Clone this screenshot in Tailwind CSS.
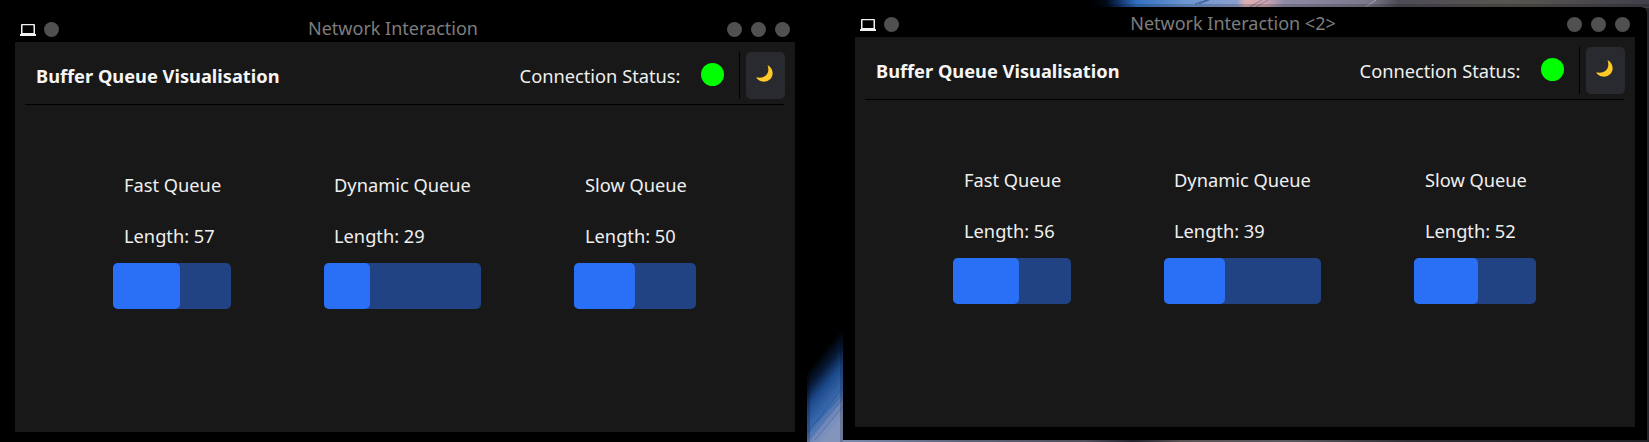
<!DOCTYPE html>
<html lang="en">
<head>
<meta charset="utf-8">
<title>Network Interaction</title>
<script src="https://cdn.jsdelivr.net/npm/@tailwindcss/browser@4"></script>
</head>
<body class="relative h-[442px] w-[1649px] overflow-hidden bg-black font-['Noto_Sans',sans-serif] text-[18.25px] leading-[25px] text-[#efefef]">

<!-- Desktop wallpaper -->
<svg class="absolute inset-0" width="1649" height="442" viewBox="0 0 1649 442">
  <defs>
    <linearGradient id="top" x1="1092" x2="1649" y1="0" y2="0" gradientUnits="userSpaceOnUse">
      <stop offset="0" stop-color="#000"/><stop offset=".025" stop-color="#020a18"/><stop offset=".05" stop-color="#12356c"/>
      <stop offset=".08" stop-color="#3470c0"/><stop offset=".17" stop-color="#6c96d0"/><stop offset=".26" stop-color="#8b9fcd"/>
      <stop offset=".275" stop-color="#dbb0b4"/><stop offset=".31" stop-color="#cfa6b2"/><stop offset=".345" stop-color="#8e8ba6"/>
      <stop offset=".5" stop-color="#797789"/><stop offset=".55" stop-color="#4d4c56"/>
      <stop offset=".75" stop-color="#58544f"/><stop offset="1" stop-color="#41404b"/>
    </linearGradient>
    <linearGradient id="gap" x1="808" y1="370" x2="853" y2="407" gradientUnits="userSpaceOnUse">
      <stop offset="0" stop-color="#000"/><stop offset=".2" stop-color="#081a38"/><stop offset=".4" stop-color="#1d4a8c"/>
      <stop offset=".68" stop-color="#3c6cb0"/><stop offset=".82" stop-color="#7189ba"/><stop offset="1" stop-color="#8495bd"/>
    </linearGradient>
    <linearGradient id="low" x1="843" x2="1649" y1="0" y2="0" gradientUnits="userSpaceOnUse">
      <stop offset="0" stop-color="#7b8caf"/><stop offset=".15" stop-color="#5d6479"/><stop offset=".3" stop-color="#51505c"/>
      <stop offset=".36" stop-color="#22242e"/><stop offset=".42" stop-color="#5b5455"/><stop offset=".55" stop-color="#5a5a60"/>
      <stop offset=".7" stop-color="#303036"/><stop offset="1" stop-color="#202027"/>
    </linearGradient>
  </defs>
  <rect x="1092" width="557" height="8" fill="url(#top)"/>
  <path d="M1195 4l12-4M1199 4l10-4" stroke="#3d5f9c"/>
  <path d="M1248 8l14-8M1254 8l14-8" stroke="#8d7d96"/>
  <path d="M1366 7l10-7" stroke="#a9a6ae"/>
  <rect x="1092" y="4" width="557" height="3" fill="#000" opacity=".18"/>
  <rect x="807" y="330" width="36" height="112" fill="url(#gap)"/>
  <g stroke="#16366c" stroke-width=".8" opacity=".35">
    <path d="M808 432 843 387M810 438 843 398M815 440 843 406M812 426 843 394"/>
  </g>
  <path d="M807 330h3v112h-3zM840 330h3v112h-3z" fill="#000" opacity=".2"/>
  <rect x="843" y="440" width="806" height="2" fill="url(#low)"/>
  <rect x="1645" y="8" width="4" height="432" fill="#25242c"/>
</svg>

<!-- First window -->
<section class="absolute left-[3px] top-[12px] h-[433px] w-[804px] rounded-t-md bg-black px-3">
  <header class="flex h-[30px] items-center justify-between px-[5px] pt-[5px]">
    <div class="flex items-center gap-2">
      <svg class="mt-px" width="16" height="12" viewBox="0 0 16 12"><path d="M2 0h12q1 0 1 1v9h1v2H0v-2h1V1q0-1 1-1Zm.5 1.3V9h11V1.3Z" fill="#f2f2f2" fill-rule="evenodd"/></svg>
      <i class="size-[15px] rounded-full bg-[#505050]"></i>
    </div>
    <h1 class="-mt-[3px] text-[18px] leading-[25px] whitespace-nowrap text-[#7d7d7d]">Network Interaction</h1>
    <div class="flex gap-[9px]"><i class="size-[15px] rounded-full bg-[#505050]"></i><i class="size-[15px] rounded-full bg-[#505050]"></i><i class="size-[15px] rounded-full bg-[#505050]"></i></div>
  </header>
  <main class="h-[390px] bg-[#181818] px-[10px] pt-[10px]">
    <div class="flex h-[53px] w-[759px] items-start border-b border-black pl-[11px]">
      <h2 class="mt-[11px] font-bold whitespace-nowrap text-[#f5f5f5]">Buffer Queue Visualisation</h2>
      <div class="ml-auto -mr-px flex">
        <span class="mt-[11px] whitespace-nowrap">Connection Status:</span>
        <i class="mt-[11px] ml-[20.5px] size-[23px] rounded-full bg-[#00ff00]"></i>
        <i class="ml-[15px] h-[47px] w-px bg-black"></i>
        <button class="ml-[6px] h-[47px] w-[39px] rounded-[5px] bg-[#282a2f] pl-[10px] pb-[4px]">
          <svg width="17" height="17" viewBox="0 0 17 17"><path d="M11.5 0C15.5 2 17.5 6.5 16.3 10.5C15 15 10.5 17.3 6.5 16.6C3.5 16.1 1 14.5.2 12.3C3.5 13 7 12.8 9.8 10.5C12.6 8 13 4 11.5 0Z" fill="#ffca28"/></svg>
        </button>
      </div>
    </div>
    <div class="flex items-start pt-[67px] pl-[88px]">
      <div class="w-[118px]"><p class="pl-[11px] whitespace-nowrap">Fast Queue</p><p class="mt-[26px] pl-[11px] whitespace-nowrap">Length: 57</p><div class="mt-[15px] h-[46px] rounded-[5px] bg-[#214283]"><div class="h-full rounded-[5px] bg-[#2970f7]" style="width:57%"></div></div></div>
      <div class="ml-[93px] w-[157px]"><p class="pl-[10px] whitespace-nowrap">Dynamic Queue</p><p class="mt-[26px] pl-[10px] whitespace-nowrap">Length: 29</p><div class="mt-[15px] h-[46px] rounded-[5px] bg-[#214283]"><div class="h-full rounded-[5px] bg-[#2970f7]" style="width:29%"></div></div></div>
      <div class="ml-[93px] w-[122px]"><p class="pl-[11px] whitespace-nowrap">Slow Queue</p><p class="mt-[26px] pl-[11px] whitespace-nowrap">Length: 50</p><div class="mt-[15px] h-[46px] rounded-[5px] bg-[#214283]"><div class="h-full rounded-[5px] bg-[#2970f7]" style="width:50%"></div></div></div>
    </div>
  </main>
</section>

<!-- Second window -->
<section class="absolute left-[843px] top-[7px] h-[433px] w-[804px] rounded-t-md bg-black px-3">
  <header class="flex h-[30px] items-center justify-between px-[5px] pt-[5px]">
    <div class="flex items-center gap-2">
      <svg class="mt-px" width="16" height="12" viewBox="0 0 16 12"><path d="M2 0h12q1 0 1 1v9h1v2H0v-2h1V1q0-1 1-1Zm.5 1.3V9h11V1.3Z" fill="#f2f2f2" fill-rule="evenodd"/></svg>
      <i class="size-[15px] rounded-full bg-[#505050]"></i>
    </div>
    <h1 class="-mt-[3px] text-[18px] leading-[25px] whitespace-nowrap text-[#7d7d7d]">Network Interaction &lt;2&gt;</h1>
    <div class="flex gap-[9px]"><i class="size-[15px] rounded-full bg-[#505050]"></i><i class="size-[15px] rounded-full bg-[#505050]"></i><i class="size-[15px] rounded-full bg-[#505050]"></i></div>
  </header>
  <main class="h-[390px] bg-[#181818] px-[10px] pt-[10px]">
    <div class="flex h-[53px] w-[759px] items-start border-b border-black pl-[11px]">
      <h2 class="mt-[11px] font-bold whitespace-nowrap text-[#f5f5f5]">Buffer Queue Visualisation</h2>
      <div class="ml-auto -mr-px flex">
        <span class="mt-[11px] whitespace-nowrap">Connection Status:</span>
        <i class="mt-[11px] ml-[20.5px] size-[23px] rounded-full bg-[#00ff00]"></i>
        <i class="ml-[15px] h-[47px] w-px bg-black"></i>
        <button class="ml-[6px] h-[47px] w-[39px] rounded-[5px] bg-[#282a2f] pl-[10px] pb-[4px]">
          <svg width="17" height="17" viewBox="0 0 17 17"><path d="M11.5 0C15.5 2 17.5 6.5 16.3 10.5C15 15 10.5 17.3 6.5 16.6C3.5 16.1 1 14.5.2 12.3C3.5 13 7 12.8 9.8 10.5C12.6 8 13 4 11.5 0Z" fill="#ffca28"/></svg>
        </button>
      </div>
    </div>
    <div class="flex items-start pt-[67px] pl-[88px]">
      <div class="w-[118px]"><p class="pl-[11px] whitespace-nowrap">Fast Queue</p><p class="mt-[26px] pl-[11px] whitespace-nowrap">Length: 56</p><div class="mt-[15px] h-[46px] rounded-[5px] bg-[#214283]"><div class="h-full rounded-[5px] bg-[#2970f7]" style="width:56%"></div></div></div>
      <div class="ml-[93px] w-[157px]"><p class="pl-[10px] whitespace-nowrap">Dynamic Queue</p><p class="mt-[26px] pl-[10px] whitespace-nowrap">Length: 39</p><div class="mt-[15px] h-[46px] rounded-[5px] bg-[#214283]"><div class="h-full rounded-[5px] bg-[#2970f7]" style="width:39%"></div></div></div>
      <div class="ml-[93px] w-[122px]"><p class="pl-[11px] whitespace-nowrap">Slow Queue</p><p class="mt-[26px] pl-[11px] whitespace-nowrap">Length: 52</p><div class="mt-[15px] h-[46px] rounded-[5px] bg-[#214283]"><div class="h-full rounded-[5px] bg-[#2970f7]" style="width:52.5%"></div></div></div>
    </div>
  </main>
</section>
</body>
</html>
